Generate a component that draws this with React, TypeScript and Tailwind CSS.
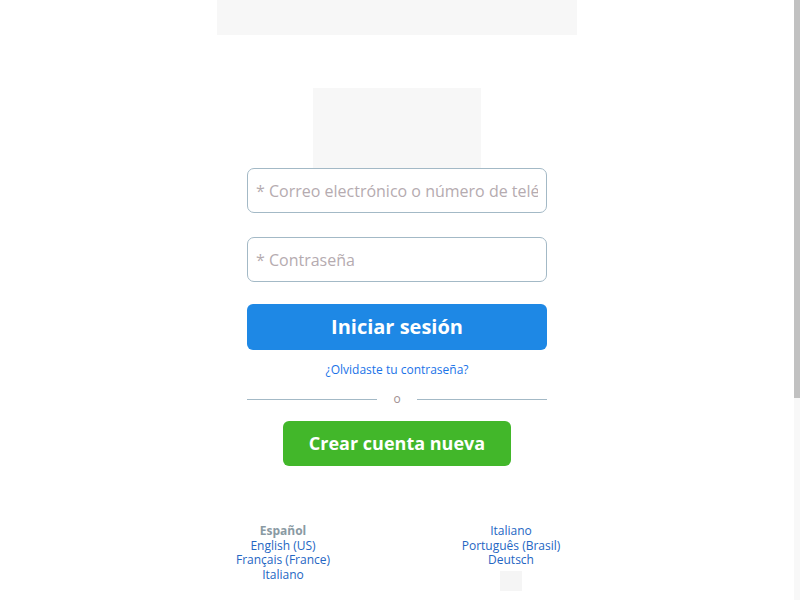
const leftLangs = ["English (US)", "Français (France)", "Italiano"];
const rightLangs = ["Italiano", "Português (Brasil)", "Deutsch"];

export default function App() {
  return (
    <div
      className="flex h-screen bg-white"
      style={{ fontFamily: '"Open Sans", "Noto Sans", sans-serif' }}
    >
      <main className="flex-1 overflow-y-auto [scrollbar-width:none]">
        <div className="flex min-h-[904px] flex-col items-center">
          {/* header placeholder */}
          <div className="h-[35px] w-[360px] bg-[#f7f7f7]" />

          {/* logo placeholder */}
          <div className="mt-[53px] h-[80px] w-[168px] bg-[#f7f7f7]" />

          <form className="flex w-[300px] flex-col" onSubmit={(e) => e.preventDefault()}>
            <input
              type="text"
              placeholder="* Correo electrónico o número de teléfono"
              className="h-[45px] w-full rounded-[7px] border border-[#a3b9c6] px-[8px] text-[16px] text-[#333] outline-none placeholder:text-[#b5abb0]"
            />
            <input
              type="password"
              placeholder="* Contraseña"
              className="mt-[24px] h-[45px] w-full rounded-[7px] border border-[#a3b9c6] px-[8px] text-[16px] text-[#333] outline-none placeholder:text-[#b5abb0]"
            />
            <button
              type="submit"
              className="mt-[22px] h-[46px] w-full rounded-[6px] bg-[#1e88e5] text-[20px] font-bold text-white"
            >
              Iniciar sesión
            </button>
          </form>

          <a href="#" className="mt-[12px] text-[12px] leading-[16px] text-[#1a73e8]">
            ¿Olvidaste tu contraseña?
          </a>

          <div className="mt-[13px] flex w-[300px] items-center">
            <div className="h-px flex-1 bg-[#a3b9c6]" />
            <span className="w-[40px] text-center text-[12px] leading-[16px] text-[#a08f8f]">o</span>
            <div className="h-px flex-1 bg-[#a3b9c6]" />
          </div>

          <button className="mt-[14px] h-[45px] w-[228px] rounded-[6px] bg-[#42b72a] text-[18px] font-bold text-white">
            Crear cuenta nueva
          </button>

          {/* languages */}
          <div className="mt-[58px] flex w-[228px] justify-between text-[12px] leading-[14.7px]">
            <ul className="flex w-0 flex-col items-center">
              <li className="whitespace-nowrap font-bold text-[#8a9aa3]">Español</li>
              {leftLangs.map((l) => (
                <li key={l} className="whitespace-nowrap text-[#2466c3]">
                  {l}
                </li>
              ))}
            </ul>
            <ul className="flex w-0 flex-col items-center">
              {rightLangs.map((l) => (
                <li key={l} className="whitespace-nowrap text-[#2466c3]">
                  {l}
                </li>
              ))}
              <li className="mt-[3px] h-[20px] w-[22px] bg-[#f5f5f5]" />
            </ul>
          </div>
        </div>
      </main>

      {/* scrollbar */}
      <aside className="w-[6px] bg-[#f8f8f8]">
        <div className="h-[398px] w-full bg-[#c1c1c1]" />
      </aside>
    </div>
  );
}
